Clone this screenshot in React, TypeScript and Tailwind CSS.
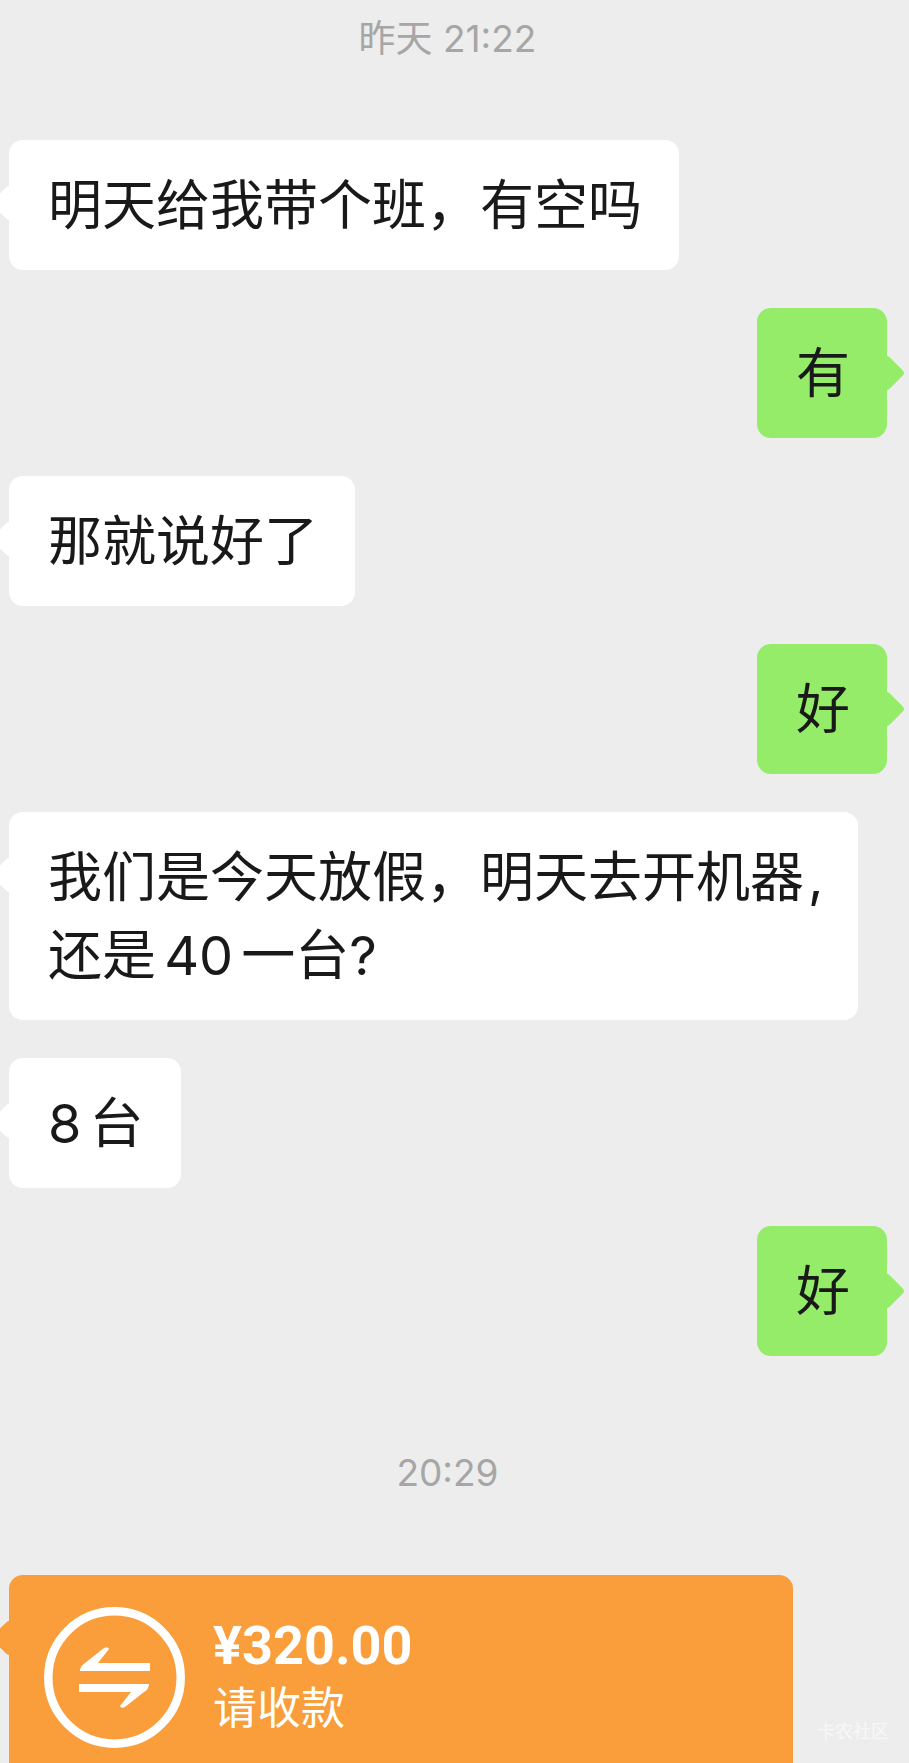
const FONT = "font-['Inter','Noto_Sans_CJK_SC',sans-serif]";

function Time({ label, className }: { label: string; className: string }) {
  return (
    <div className={`pr-[14px] text-center text-[37px] leading-[44px] text-[#a6a6a6] ${className}`}>
      {label}
    </div>
  );
}

function Bubble({
  side,
  children,
  className = "",
  innerClassName = "",
}: {
  side: "left" | "right";
  children: React.ReactNode;
  className?: string;
  innerClassName?: string;
}) {
  const isLeft = side === "left";
  return (
    <div className={`flex ${isLeft ? "justify-start pl-[9px]" : "justify-end pr-[22px]"} ${className}`}>
      <div
        className={`relative rounded-[14px] pb-[25px] pl-[39px] pr-[37px] pt-[27px] text-[54px] leading-[78px] tracking-normal [word-spacing:-7px] text-[#191919] ${
          isLeft ? "bg-white" : "bg-[#95ec69]"
        } ${innerClassName}`}
      >
        <span
          className={`absolute h-[26px] w-[26px] rotate-45 rounded-[4px] ${
            isLeft ? "left-[-13px] top-[50px] bg-white" : "right-[-13px] top-[52px] bg-[#95ec69]"
          }`}
        />
        <span className="relative">{children}</span>
      </div>
    </div>
  );
}

function TransferCard() {
  return (
    <div className="relative ml-[9px] mt-[80px] h-[260px] w-[784px] rounded-t-[14px] bg-[#fa9d3b] pl-[35px] pt-[32px]">
      <span className="absolute left-[-13px] top-[50px] h-[26px] w-[26px] rotate-45 rounded-[4px] bg-[#fa9d3b]" />
      <div className="relative flex items-start gap-[28px]">
        <svg width="141" height="141" viewBox="0 0 141 141" fill="none" className="shrink-0">
          <circle cx="70.5" cy="70.5" r="66.2" stroke="white" strokeWidth="8.5" />
          <path d="M36 64 Q36 59 41 56 L60 41 Q64 39 65 42 L54 56 H106 V64 Z" fill="white" />
          <path d="M105 77 Q105 82 100 85 L81 100 Q77 102 76 99 L87 85 H35 V77 Z" fill="white" />
        </svg>
        <div className="flex flex-col text-white">
          <div className="mt-[9px] font-['Roboto','Noto_Sans_CJK_SC',sans-serif] text-[54px] font-bold leading-[60px]">
            ¥320.00
          </div>
          <div className="mt-[4px] text-[44px] leading-[56px]">请收款</div>
        </div>
      </div>
    </div>
  );
}

export default function App() {
  return (
    <div className={`relative h-[1763px] w-[909px] overflow-hidden bg-[#ededed] ${FONT}`}>
      <Time label="昨天 21:22" className="pt-[17px]" />
      <Bubble side="left" className="mt-[79px]">明天给我带个班，有空吗</Bubble>
      <Bubble side="right" className="mt-[38px]">有</Bubble>
      <Bubble side="left" className="mt-[38px]">那就说好了</Bubble>
      <Bubble side="right" className="mt-[38px]">好</Bubble>
      <Bubble side="left" className="mt-[38px]" innerClassName="w-[849px] whitespace-nowrap">
        我们是今天放假，明天去开机器<span className="ml-[4px]">,</span>
        <br />
        还是 40 一台?
      </Bubble>
      <Bubble side="left" className="mt-[38px]">8 台</Bubble>
      <Bubble side="right" className="mt-[38px]">好</Bubble>
      <Time label="20:29" className="mt-[95px]" />
      <TransferCard />
      <span className="absolute bottom-[20px] right-[20px] text-[18px] leading-[22px] text-white/60">卡农社区</span>
    </div>
  );
}
